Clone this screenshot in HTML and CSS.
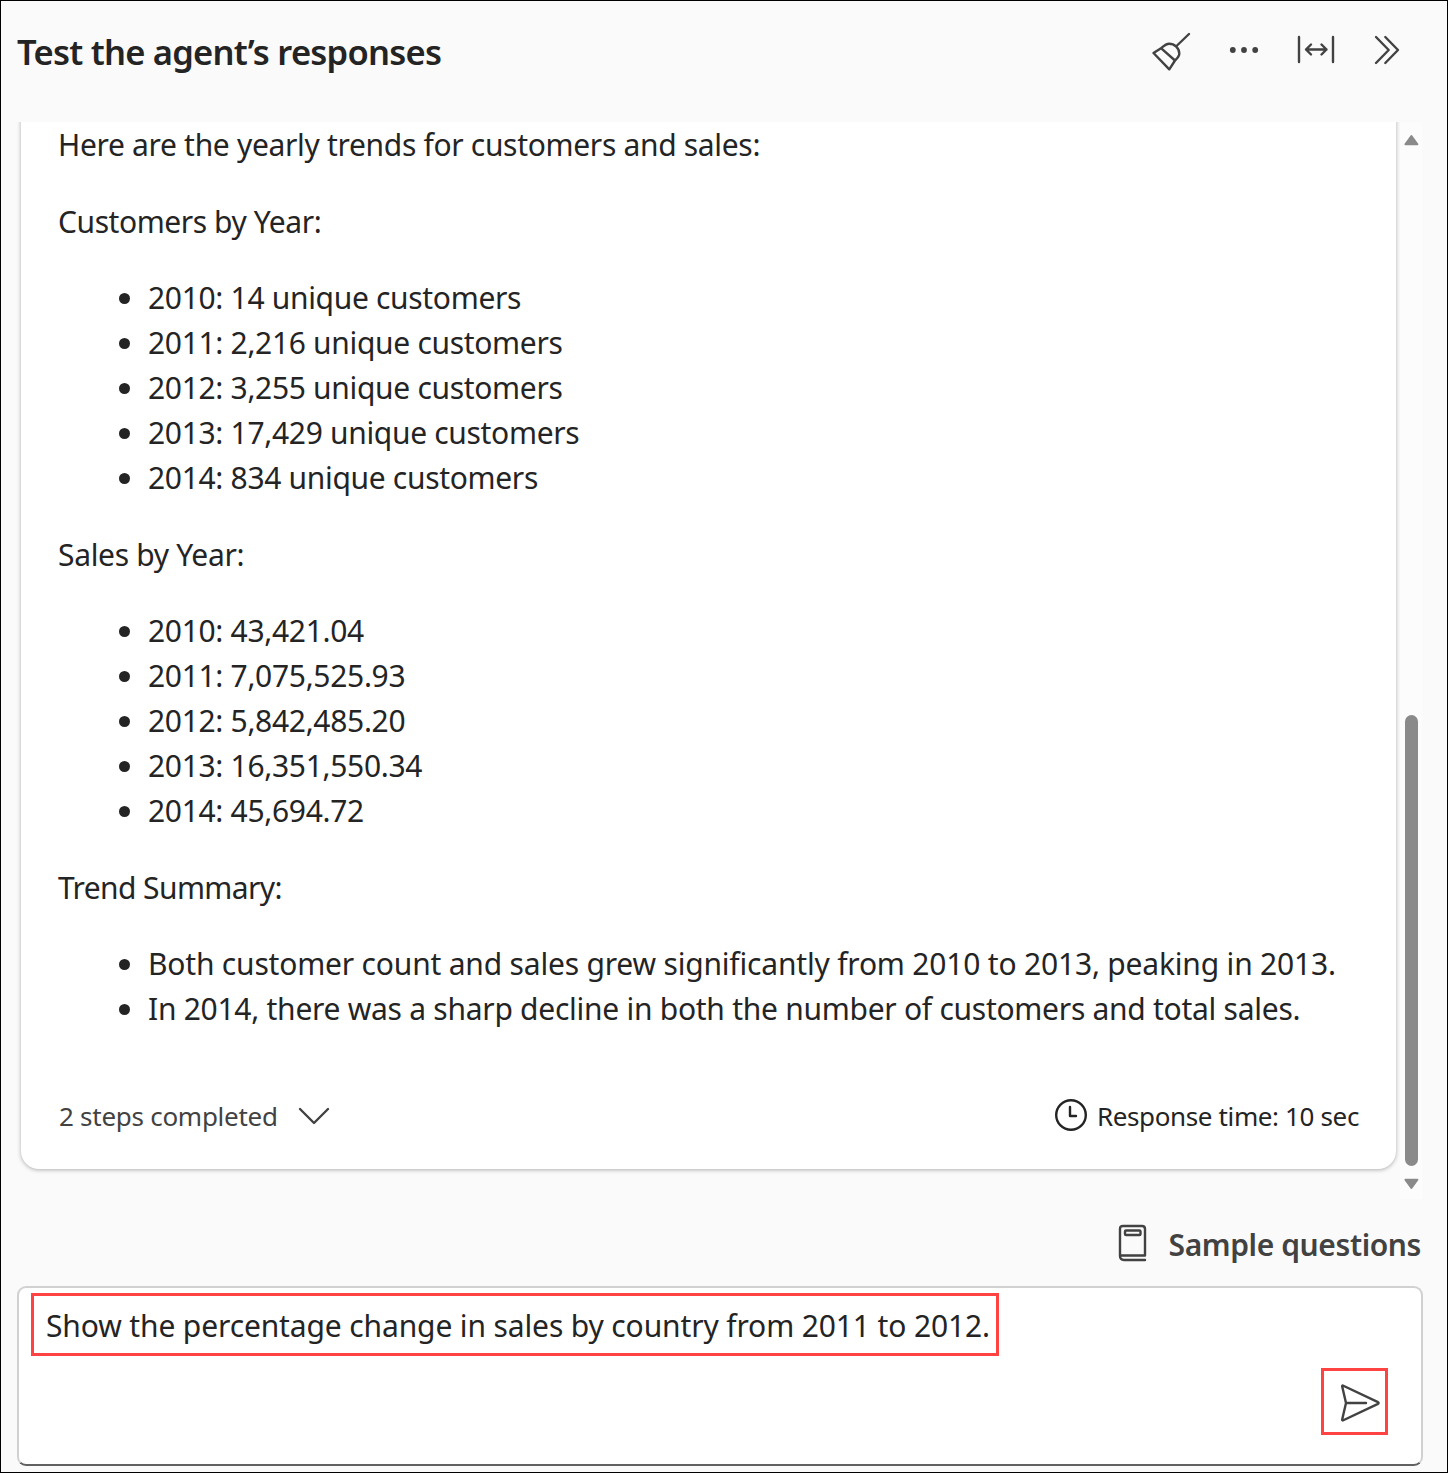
FILE: index.html
```html
<!DOCTYPE html>
<html lang="en">
<head>
<meta charset="utf-8">
<title>Test the agent’s responses</title>
<link rel="stylesheet" href="styles.css">
</head>
<body>
<main class="panel">
  <header class="panel-header">
    <h1 class="panel-title">Test the agent’s responses</h1>
    <div class="toolbar">
      <button class="tool tool-clear" aria-label="Clear chat"><svg class="icon" width="40" height="40" viewBox="0 0 40 40"><path d="M38 3 25 15.500M2.500 22 18.300 38.300 24 29.500C26.500 27 28.300 25.500 28.300 22.500C28.300 17 23.500 12.800 18 12.800C15 12.800 13.500 14.500 10 17.200ZM10 17.200 24 29.500"/></svg></button>
      <button class="tool" aria-label="More options"><svg class="dots" width="30" height="8" viewBox="0 0 30 8"><circle cx="3.800" cy="4" r="2.900"/><circle cx="15" cy="4" r="2.900"/><circle cx="26.200" cy="4" r="2.900"/></svg></button>
      <button class="tool tool-resize" aria-label="Resize panel"><svg class="icon" width="38" height="30" viewBox="0 0 38 30"><path d="M2 2V27M36 2V27M9 14.500H29.500M14 9.500 9 14.500 14 19.500M24.500 9.500 29.500 14.500 24.500 19.500"/></svg></button>
      <button class="tool" aria-label="Collapse panel"><svg class="icon" width="26" height="30" viewBox="0 0 26 30"><path d="M2 2 14.700 15 2 28M11.300 2 24 15 11.300 28"/></svg></button>
    </div>
  </header>

  <section class="chat">
    <article class="card">
      <div class="message">
        <p>Here are the yearly trends for customers and sales:</p>
        <p class="heading">Customers by Year:</p>
        <ul>
          <li><span>2010: 14 unique customers</span></li>
          <li><span>2011: 2,216 unique customers</span></li>
          <li><span>2012: 3,255 unique customers</span></li>
          <li><span>2013: 17,429 unique customers</span></li>
          <li><span>2014: 834 unique customers</span></li>
        </ul>
        <p>Sales by Year:</p>
        <ul>
          <li><span>2010: 43,421.04</span></li>
          <li><span>2011: 7,075,525.93</span></li>
          <li><span>2012: 5,842,485.20</span></li>
          <li><span>2013: 16,351,550.34</span></li>
          <li><span>2014: 45,694.72</span></li>
        </ul>
        <p class="heading summary-heading">Trend Summary:</p>
        <ul class="summary">
          <li><span>Both customer count and sales grew significantly from 2010 to 2013, peaking in 2013.</span></li>
          <li><span>In 2014, there was a sharp decline in both the number of customers and total sales.</span></li>
        </ul>
      </div>
      <footer class="card-footer">
        <div class="steps"><span>2 steps completed</span><svg class="icon" width="32" height="18" viewBox="0 0 32 18"><path d="M2 2 16 16 30 2"/></svg></div>
        <div class="timing"><svg class="icon" width="34" height="34" viewBox="0 0 34 34"><circle cx="17" cy="17" r="14.800"/><path d="M16 9V18H22"/></svg><span>Response time: 10 sec</span></div>
      </footer>
    </article>
    <div class="scrollbar">
      <svg class="arrow" width="16" height="12" viewBox="0 0 16 12"><path d="M8.400 2 14.400 10.300H2.400Z"/></svg>
      <div class="track"><div class="thumb"></div></div>
      <svg class="arrow" width="16" height="12" viewBox="0 0 16 12"><path d="M2.400 1.700H14.400L8.400 10Z"/></svg>
    </div>
  </section>

  <div class="samples"><svg class="icon" width="30" height="38" viewBox="0 0 30 38"><path d="M27 36H6Q2 36 2 32V5Q2 2 5 2H24Q27 2 27 5V31.500H2M8 6.500H21.500Q22.500 6.500 22.500 7.500V10Q22.500 11 21.500 11H8Q7 11 7 10V7.500Q7 6.500 8 6.500Z"/></svg><span>Sample questions</span></div>

  <section class="composer">
    <div class="prompt">Show the percentage change in sales by country from 2011 to 2012.</div>
    <button class="send" aria-label="Send"><svg class="icon" width="40" height="40" viewBox="0 0 40 40"><path d="M2.800 2.500 38 19.200Q39.200 20 38 20.800L2.800 37.500Q2 37.500 2.200 36.500L6 20 2.200 3.500Q2 2.500 2.800 2.500ZM6 20H26"/></svg></button>
  </section>
</main>
</body>
</html>
```
FILE: styles.css
```css
* { box-sizing: border-box; }
body { margin: 0; font-family: "Noto Sans", sans-serif; font-size: 30px; line-height: 45px; letter-spacing: -.32px; color: #242424; white-space: nowrap; }
h1, p, ul { margin: 0; }
button { padding: 0; border: 0; background: none; }
svg { display: block; }
.icon { fill: none; stroke: #424242; stroke-width: 2.4; stroke-linecap: round; stroke-linejoin: round; }

.panel { display: flex; flex-direction: column; width: 1448px; height: 1473px; padding: 0 24px 6px 16px; border: 1px solid #000; background: #fafafa; }
.panel-header { display: flex; justify-content: space-between; height: 121px; padding-top: 28px; }
.panel-title { font-size: 34.5px; font-weight: 600; line-height: 46px; letter-spacing: -.75px; }
.toolbar { display: flex; align-items: center; height: 42px; gap: 38px; padding-right: 23px; }
.tool-clear { padding-top: 1px; }
.tool-resize { margin-right: 1.5px; }
.dots { fill: #424242; }

.chat { display: flex; justify-content: space-between; height: 1077px; padding: 0 1px 0 4px; overflow: hidden; }
.card { display: flex; flex-direction: column; justify-content: space-between; width: 1375px; height: 1067px; margin-top: -20px; padding: 20px 37px 30px; border-radius: 18px; background: #fff; box-shadow: 0 1px 4px rgba(0,0,0,.3); }
.message p { margin-bottom: 31.5px; }
.message ul { margin: -1px 0 32.5px; padding-left: 90px; }
.message li { height: 45px; font-size: 31.5px; }
.message li span { font-size: 30px; }
.heading { letter-spacing: -.43px; }
.summary-heading { letter-spacing: -.6px; }
.summary li:first-child { letter-spacing: -.19px; }
.summary li:last-child { letter-spacing: -.27px; }
.card-footer { display: flex; justify-content: space-between; font-size: 26px; }
.steps, .timing { display: flex; align-items: center; }
.steps { gap: 20px; padding-left: 1px; color: #424242; letter-spacing: -.27px; }
.steps .icon { margin-bottom: 2px; }
.timing { gap: 9px; letter-spacing: -.37px; }
.timing .icon { margin-bottom: 4px; stroke: #242424; }

.scrollbar { display: flex; flex-direction: column; align-items: center; width: 22px; padding: 12px 0 9px; background: #fcfcfc; }
.arrow { fill: #8a8a8a; stroke: #8a8a8a; stroke-width: 2; stroke-linejoin: round; }
.track { flex: 1; padding-top: 569px; }
.thumb { width: 13px; height: 451px; border-radius: 7px; background: #8a8a8a; }

.samples { display: flex; align-items: center; justify-content: flex-end; gap: 21px; height: 87px; padding-right: 2px; font-weight: 600; letter-spacing: -.4px; color: #424242; }
.samples span { padding-top: 3px; }

.composer { display: flex; flex-direction: column; justify-content: space-between; width: 1406px; height: 180px; padding: 5px 33px 29px 12px; border: 2px solid #d1d1d1; border-bottom-color: #616161; border-radius: 9px; background: #fff; }
.prompt { align-self: flex-start; width: 968px; height: 63px; padding: 7px 0 0 12px; border: 3px solid #ff4343; letter-spacing: -.13px; }
.send { align-self: flex-end; width: 67px; height: 67px; padding: 3px 0 0 16px; border: 3px solid #ff4343; }
```
